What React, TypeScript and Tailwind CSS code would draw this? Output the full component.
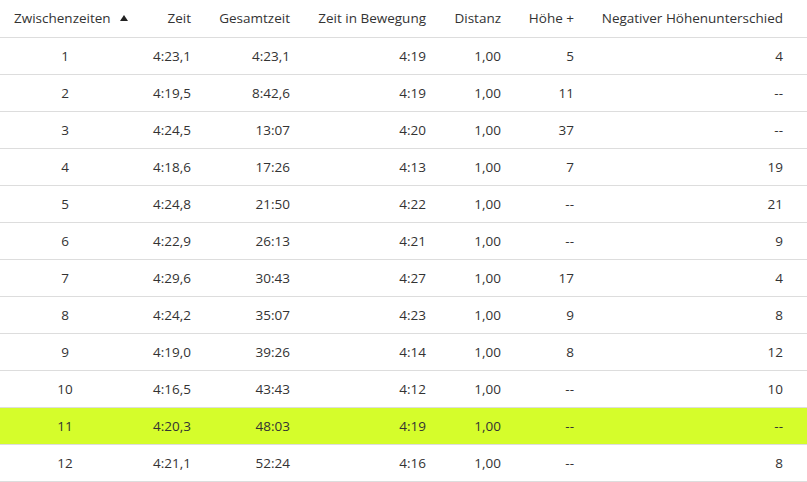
const rows = [
  ["1", "4:23,1", "4:23,1", "4:19", "1,00", "5", "4"],
  ["2", "4:19,5", "8:42,6", "4:19", "1,00", "11", "--"],
  ["3", "4:24,5", "13:07", "4:20", "1,00", "37", "--"],
  ["4", "4:18,6", "17:26", "4:13", "1,00", "7", "19"],
  ["5", "4:24,8", "21:50", "4:22", "1,00", "--", "21"],
  ["6", "4:22,9", "26:13", "4:21", "1,00", "--", "9"],
  ["7", "4:29,6", "30:43", "4:27", "1,00", "17", "4"],
  ["8", "4:24,2", "35:07", "4:23", "1,00", "9", "8"],
  ["9", "4:19,0", "39:26", "4:14", "1,00", "8", "12"],
  ["10", "4:16,5", "43:43", "4:12", "1,00", "--", "10"],
  ["11", "4:20,3", "48:03", "4:19", "1,00", "--", "--"],
  ["12", "4:21,1", "52:24", "4:16", "1,00", "--", "8"],
];

const headers = ["Zeit", "Gesamtzeit", "Zeit in Bewegung", "Distanz", "Höhe +"];

const cols = "grid grid-cols-[130px_75px_99px_136px_75px_73px_1fr]";

export default function App() {
  return (
    <div className="w-[807px] h-[482px] bg-white text-[13.5px] text-[#333] font-['Open_Sans',sans-serif] overflow-hidden">
      <div className={`${cols} h-[38px] items-center border-b border-[#ddd] whitespace-nowrap`}>
        <div className="pl-[14px] flex items-center">
          Zwischenzeiten
          <svg width="8" height="6" viewBox="0 0 8 6" className="ml-[9px] mb-[2px]">
            <path d="M4 0 L8 6 L0 6 Z" fill="#222" />
          </svg>
        </div>
        {headers.map((h) => (
          <div key={h} className="text-right pr-[14px]">
            {h}
          </div>
        ))}
        <div className="text-right pr-[24px]">Negativer Höhenunterschied</div>
      </div>
      {rows.map((r) => (
        <div
          key={r[0]}
          className={`${cols} h-[37px] items-center border-b border-[#ddd] ${
            r[0] === "11" ? "bg-[#d5fd2b]" : ""
          }`}
        >
          <div className="text-center">{r[0]}</div>
          {r.slice(1, 6).map((v, i) => (
            <div key={i} className="text-right pr-[14px]">
              {v}
            </div>
          ))}
          <div className="text-right pr-[24px]">{r[6]}</div>
        </div>
      ))}
    </div>
  );
}
